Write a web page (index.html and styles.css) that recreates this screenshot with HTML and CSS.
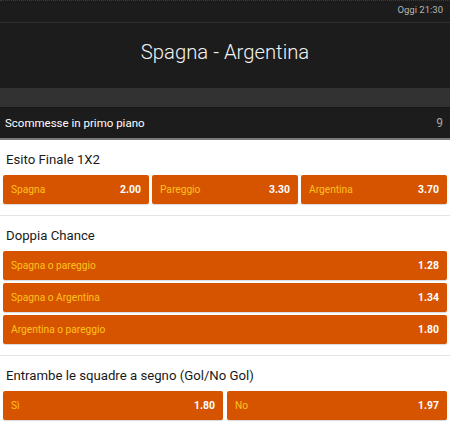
FILE: index.html
```html
<!DOCTYPE html>
<html lang="it">
<head>
<meta charset="utf-8">
<title>Spagna - Argentina</title>
<link rel="stylesheet" href="styles.css">
</head>
<body>
<div class="topbar"><span class="time">Oggi 21:30</span></div>
<div class="match">Spagna - Argentina</div>
<div class="band"></div>
<div class="featured">
  <span>Scommesse in primo piano</span>
  <span class="count">9</span>
</div>

<section class="market">
  <h2 class="market-title">Esito Finale 1X2</h2>
  <div class="odds cols-3">
    <button class="odd"><span class="label">Spagna</span><span class="price">2.00</span></button>
    <button class="odd"><span class="label">Pareggio</span><span class="price">3.30</span></button>
    <button class="odd"><span class="label">Argentina</span><span class="price">3.70</span></button>
  </div>
</section>

<section class="market">
  <h2 class="market-title">Doppia Chance</h2>
  <div class="odds cols-1">
    <button class="odd"><span class="label">Spagna o pareggio</span><span class="price">1.28</span></button>
    <button class="odd"><span class="label">Spagna o Argentina</span><span class="price">1.34</span></button>
    <button class="odd"><span class="label">Argentina o pareggio</span><span class="price">1.80</span></button>
  </div>
</section>

<section class="market">
  <h2 class="market-title">Entrambe le squadre a segno (Gol/No Gol)</h2>
  <div class="odds cols-2">
    <button class="odd"><span class="label">Sì</span><span class="price">1.80</span></button>
    <button class="odd"><span class="label">No</span><span class="price">1.97</span></button>
  </div>
</section>
</body>
</html>
```

FILE: styles.css
```css
* { box-sizing: border-box; }
html, body { margin: 0; padding: 0; }
body {
  font-family: Roboto, "Liberation Sans", Arial, sans-serif;
  background: #ffffff;
  width: 450px;
}
.topbar {
  height: 23px;
  background: #1c1c1c;
  border-top: 1px dotted #3a3a3a;
  border-bottom: 1px solid #2e2e2e;
  display: flex;
  justify-content: flex-end;
  align-items: center;
  padding: 0 7px 5px 0;
}
.time {
  font-size: 9.5px;
  color: #b5b5b5;
}
.match {
  height: 65px;
  background: #1c1c1c;
  color: #f2f2f2;
  font-size: 20.3px;
  font-weight: 300;
  display: flex;
  justify-content: center;
  align-items: center;
  padding-bottom: 7px;
}
.band {
  height: 20px;
  background: #323232;
  border-bottom: 1px solid #161616;
}
.featured {
  height: 32px;
  background: #1c1c1c;
  color: #ffffff;
  font-size: 11.5px;
  display: flex;
  justify-content: space-between;
  align-items: center;
  padding: 0 7px 1px 5px;
  border-bottom: 2px solid #7a7a7a;
}
.featured .count { color: #a8a8a8; font-size: 12px; }
.market {
  padding: 0 3px 11px;
  border-bottom: 1px solid #e3e3e3;
}
.market:last-child { border-bottom: none; }
.market-title {
  margin: 0;
  font-size: 13.2px;
  font-weight: 400;
  color: #1a1a1a;
  line-height: 18px;
  padding: 11px 3px 6px;
}
.odds {
  display: grid;
  gap: 3px;
}
.cols-1 { grid-template-columns: 1fr; }
.cols-2 { grid-template-columns: 1fr 1fr; gap: 4px; }
.cols-3 { grid-template-columns: 1fr 1fr 1fr; }
.odd {
  height: 29px;
  margin: 0;
  border: none;
  border-radius: 2px;
  background: #d65400;
  box-shadow: 0 1px 1px rgba(0,0,0,0.15);
  display: flex;
  justify-content: space-between;
  align-items: center;
  padding: 0 8px 0 8px;
  font-family: inherit;
  font-size: 10.2px;
}
.label { color: #ffc21a; }
.price { color: #ffffff; font-weight: 700; font-size: 10.4px; }
```
